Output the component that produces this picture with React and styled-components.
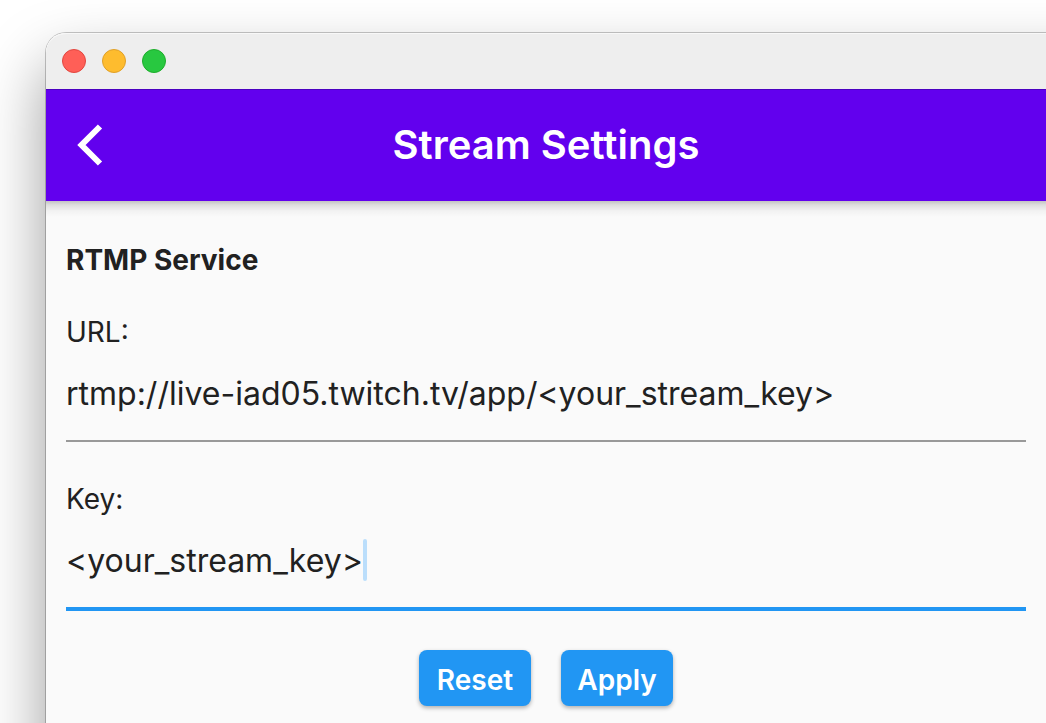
import React, { useState } from "react";
import styled, { createGlobalStyle } from "styled-components";

const GlobalStyle = createGlobalStyle`
  * { box-sizing: border-box; }
  html, body, #root { height: 100%; }
  body {
    margin: 0;
    background: #fff;
    font-family: Inter, "Liberation Sans", sans-serif;
    color: #212121;
  }
`;

const Desktop = styled.div`
  min-height: 100%;
  display: flex;
  padding: 33px 0 0 46px;
  overflow: hidden;
  isolation: isolate;
`;

/* The shadow is cast by a larger box so that it does not fade at the screen edges. */
const Window = styled.main`
  position: relative;
  flex: 1;
  min-width: 0;
  display: flex;
  flex-direction: column;
  border-top-left-radius: 20px;
  background: #fafafa;
  &::before {
    content: "";
    position: absolute;
    z-index: -1;
    inset: 0 -300px -300px 0;
    border-radius: 20px;
    box-shadow: 0 0 0 1px rgba(0, 0, 0, 0.22), 0 32px 64px rgba(0, 0, 0, 0.4);
  }
`;

const TitleBar = styled.div`
  display: flex;
  align-items: center;
  gap: 16px;
  height: 56px;
  padding-left: 16px;
  border-top-left-radius: 20px;
  background: #eee;
  box-shadow: inset 0 1px 0 #f8f8f8;
`;

const WindowButton = styled.button`
  width: 24px;
  height: 24px;
  padding: 0;
  border: 1px solid ${(p) => p.$edge};
  border-radius: 50%;
  background: ${(p) => p.$fill};
`;

const AppBar = styled.header`
  display: grid;
  grid-template-columns: 88px 1fr 88px;
  align-items: center;
  height: 112px;
  background: #6200ee;
  box-shadow: inset 0 1px 0 #4a00c0;
`;

const BackButton = styled.button`
  display: flex;
  align-items: center;
  justify-content: center;
  height: 88px;
  padding: 0;
  border: 0;
  background: none;
`;

const Title = styled.h1`
  margin: 0;
  font-size: 40px;
  line-height: 48px;
  font-weight: 600;
  text-align: center;
  color: #fff;
`;

const Form = styled.form`
  display: flex;
  flex-direction: column;
  padding: 41px 20px 16px;
  background: linear-gradient(
      rgba(0, 0, 0, 0.22),
      rgba(0, 0, 0, 0.11) 4px,
      rgba(0, 0, 0, 0.03) 10px,
      transparent 16px
    )
    no-repeat;
`;

const SectionTitle = styled.h2`
  margin: 0 0 36px;
  font-size: 28px;
  line-height: 36px;
  font-weight: 700;
`;

const Field = styled.div`
  display: flex;
  flex-direction: column;
  gap: 19px;
  margin-bottom: 39px;
`;

const Label = styled.label`
  font-size: 28px;
  line-height: 36px;
`;

const InputLine = styled.div`
  display: flex;
  align-items: center;
  padding-bottom: 23px;
  border-bottom: ${(p) => (p.$active ? "4px solid #2196f3" : "2px solid #999")};
`;

const Input = styled.input`
  field-sizing: content;
  max-width: 100%;
  height: 48px;
  padding: 0;
  border: 0;
  outline: 0;
  background: none;
  color: inherit;
  caret-color: transparent;
  font-family: inherit;
  font-size: 32px;
`;

const Caret = styled.span`
  width: 4px;
  height: 42px;
  border-radius: 2px;
  background: #bbdefb;
`;

const Actions = styled.div`
  display: flex;
  justify-content: center;
  gap: 30px;
`;

const Button = styled.button`
  width: 112px;
  height: 56px;
  padding: 4px 0 0;
  border: 0;
  border-radius: 8px;
  background: #2196f3;
  color: #fff;
  font-family: inherit;
  font-size: 28px;
  font-weight: 600;
  box-shadow: 0 2px 4px rgba(0, 0, 0, 0.3);
`;

function TextField({ id, label, initial, active }) {
  const [value, setValue] = useState(initial);
  return (
    <Field>
      <Label htmlFor={id}>{label}</Label>
      <InputLine $active={active}>
        <Input id={id} type="text" spellCheck={false} value={value} onChange={(e) => setValue(e.target.value)} />
        {active && <Caret />}
      </InputLine>
    </Field>
  );
}

export default function App() {
  return (
    <>
      <GlobalStyle />
      <Desktop>
        <Window>
          <TitleBar>
            <WindowButton aria-label="Close" $fill="#ff5f57" $edge="#e2463f" />
            <WindowButton aria-label="Minimize" $fill="#febc2e" $edge="#e0a028" />
            <WindowButton aria-label="Zoom" $fill="#28c840" $edge="#1dad2b" />
          </TitleBar>
          <AppBar>
            <BackButton aria-label="Back">
              <svg width="26" height="42" viewBox="0 0 26 42" fill="none" stroke="#fff" strokeWidth="6">
                <path d="M23 2.5 L4.5 21 L23 39.5" />
              </svg>
            </BackButton>
            <Title>Stream Settings</Title>
          </AppBar>
          <Form onSubmit={(e) => e.preventDefault()}>
            <SectionTitle>RTMP Service</SectionTitle>
            <TextField id="url" label="URL:" initial="rtmp://live-iad05.twitch.tv/app/<your_stream_key>" />
            <TextField id="key" label="Key:" initial="<your_stream_key>" active />
            <Actions>
              <Button type="reset">Reset</Button>
              <Button type="submit">Apply</Button>
            </Actions>
          </Form>
        </Window>
      </Desktop>
    </>
  );
}
